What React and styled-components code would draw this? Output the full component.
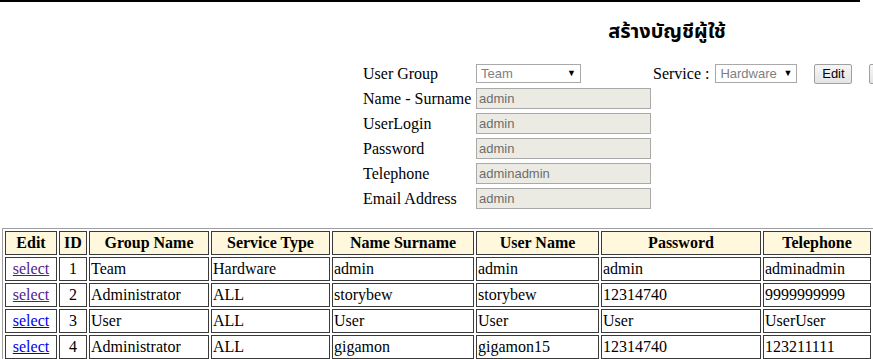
import React from "react";
import styled, { createGlobalStyle } from "styled-components";

const Global = createGlobalStyle`
  html, body { margin: 0; padding: 0; overflow: hidden; background: #fff; }
  body { font-family: "Liberation Serif", "Times New Roman", serif; font-size: 16px; color: #000; }
`;

const Page = styled.div`
  width: 873px;
  height: 359px;
  overflow: hidden;
`;

const TopRule = styled.div`
  width: 860px;
  height: 2px;
  background: #000;
`;

const Title = styled.h2`
  margin: 0;
  padding: 20px 0 0 461px;
  height: 39px;
  box-sizing: border-box;
  text-align: center;
  font-family: Tahoma, "Noto Sans Thai", "Noto Sans", "DejaVu Sans", sans-serif;
  font-size: 20px;
  font-weight: bold;
  line-height: 20px;
  white-space: nowrap;
`;

const Form = styled.div`
  padding: 20px 0 0 363px;
  display: flex;
  flex-direction: column;
`;

const Row = styled.div`
  display: flex;
  align-items: center;
  height: 25px;
  white-space: nowrap;
`;

const Label = styled.span`
  width: 113px;
  flex: none;
  line-height: 18px;
`;

const Input = styled.input`
  box-sizing: border-box;
  width: 175px;
  height: 21px;
  margin: 0;
  padding: 1px 2px;
  border: 1px solid #a9a9a9;
  background: #ebebe4;
  color: #6d6d6d;
  font-family: "Liberation Sans", Arial, sans-serif;
  font-size: 13px;
`;

const SelectWrap = styled.div`
  position: relative;
  flex: none;
  width: ${(p) => p.$w}px;
  height: 19px;
  box-sizing: border-box;
  border: 1px solid #a9a9a9;
  background: #fff;
  color: #808080;
  font-family: "Liberation Sans", Arial, sans-serif;
  font-size: 13px;
  line-height: 17px;
  padding-left: 4px;
`;

const Arrow = styled.span`
  position: absolute;
  right: 4px;
  top: 0;
  color: #000;
  font-size: 9px;
  line-height: 17px;
`;

const ServiceGroup = styled.div`
  display: flex;
  align-items: center;
  margin-left: 72px;
`;

const ServiceLabel = styled.span`
  margin-right: 6px;
  line-height: 18px;
`;

const Button = styled.button`
  flex: none;
  box-sizing: border-box;
  height: 20px;
  min-width: 38px;
  margin: 0 0 0 17px;
  padding: 0 ${(p) => p.$pad || 6}px;
  border: 1px solid #a0a0a0;
  border-radius: 2px;
  background: linear-gradient(#f6f6f6, #e4e4e4);
  color: #000;
  font-family: "Liberation Sans", Arial, sans-serif;
  font-size: 13px;
  line-height: 18px;
`;

const TableArea = styled.div`
  width: 1100px;
  padding: 17px 0 0 2px;
`;

const Table = styled.table`
  border-collapse: separate;
  border-spacing: 2px;
  border: 1px solid #a0a0a0;
  border-right-color: #707070;
  border-bottom-color: #707070;
  white-space: nowrap;
`;

const Th = styled.th`
  width: ${(p) => p.$w - 4}px;
  min-width: ${(p) => p.$w - 4}px;
  max-width: ${(p) => p.$w - 4}px;
  height: 20px;
  padding: 1px;
  border: 1px solid #3a3a3a;
  background: #fff8dc;
  font-weight: bold;
  font-size: 16px;
  line-height: 18px;
  text-align: center;
  overflow: hidden;
`;

const Td = styled.td`
  height: 20px;
  padding: 1px;
  border: 1px solid #3a3a3a;
  font-size: 16px;
  line-height: 18px;
  overflow: hidden;
  text-align: ${(p) => (p.$center ? "center" : "left")};
`;

const SelectLink = styled.a`
  color: ${(p) => (p.$visited ? "#551a8b" : "#0000ee")};
  text-decoration: underline;
  cursor: pointer;
`;

const columns = [
  ["Edit", 52],
  ["ID", 28],
  ["Group Name", 120],
  ["Service Type", 119],
  ["Name Surname", 142],
  ["User Name", 123],
  ["Password", 160],
  ["Telephone", 108],
  ["Email", 120],
];

const rows = [
  [1, "Team", "Hardware", "admin", "admin", "admin", "adminadmin", "admin", true],
  [2, "Administrator", "ALL", "storybew", "storybew", "12314740", "9999999999", "storybew", true],
  [3, "User", "ALL", "User", "User", "User", "UserUser", "User", false],
  [4, "Administrator", "ALL", "gigamon", "gigamon15", "12314740", "123211111", "gigamon", false],
];

const fields = [
  ["Name - Surname", "admin"],
  ["UserLogin", "admin"],
  ["Password", "admin"],
  ["Telephone", "adminadmin"],
  ["Email Address", "admin"],
];

export default function App() {
  return (
    <Page>
      <Global />
      <TopRule />
      <Title>สร้างบัญชีผู้ใช้</Title>
      <Form>
        <Row>
          <Label>User Group</Label>
          <SelectWrap $w={105}>
            Team<Arrow>▼</Arrow>
          </SelectWrap>
          <ServiceGroup>
            <ServiceLabel>Service :</ServiceLabel>
            <SelectWrap $w={82}>
              Hardware<Arrow>▼</Arrow>
            </SelectWrap>
            <Button>Edit</Button>
            <Button $pad={12}>Delete</Button>
          </ServiceGroup>
        </Row>
        {fields.map(([l, v]) => (
          <Row key={l}>
            <Label>{l}</Label>
            <Input value={v} disabled readOnly />
          </Row>
        ))}
      </Form>
      <TableArea>
        <Table>
          <thead>
            <tr>
              {columns.map(([c, w]) => (
                <Th key={c} $w={w}>{c}</Th>
              ))}
            </tr>
          </thead>
          <tbody>
            {rows.map((r) => (
              <tr key={r[0]}>
                <Td $center>
                  <SelectLink $visited={r[8]}>select</SelectLink>
                </Td>
                <Td $center>{r[0]}</Td>
                <Td>{r[1]}</Td>
                <Td>{r[2]}</Td>
                <Td>{r[3]}</Td>
                <Td>{r[4]}</Td>
                <Td>{r[5]}</Td>
                <Td>{r[6]}</Td>
                <Td>{r[7]}</Td>
              </tr>
            ))}
          </tbody>
        </Table>
      </TableArea>
    </Page>
  );
}
